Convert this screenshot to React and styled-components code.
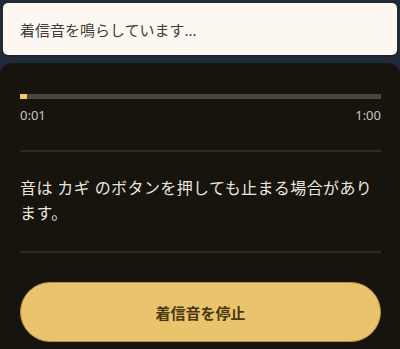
import React from "react";
import styled, { createGlobalStyle } from "styled-components";

const GlobalStyle = createGlobalStyle`
  html, body {
    margin: 0;
    padding: 0;
    background: #1f2a3b;
  }
  body {
    font-family: "Noto Sans", "Noto Sans CJK JP", sans-serif;
  }
`;

const Page = styled.div`
  width: 400px;
  height: 349px;
  display: flex;
  flex-direction: column;
  background: #1f2a3b;
  overflow: hidden;
`;

const Toast = styled.div`
  box-sizing: border-box;
  margin: 3px 3px 0;
  height: 52px;
  display: flex;
  align-items: center;
  padding: 0 17px;
  background: #fdf7f2;
  border-radius: 5px;
  color: #3f3c3b;
  font-size: 15px;
  box-shadow: 0 1px 2px rgba(0, 0, 0, 0.3);
`;

const Sheet = styled.div`
  box-sizing: border-box;
  margin-top: 8px;
  flex: 1;
  display: flex;
  flex-direction: column;
  padding: 31px 19px 0 20px;
  background: #17130d;
  border-radius: 12px 12px 0 0;
`;

const Track = styled.div`
  height: 5px;
  background: #4a463b;
`;

const Fill = styled.div`
  height: 100%;
  background: #f2c863;
`;

const Times = styled.div`
  display: flex;
  justify-content: space-between;
  margin-top: 7px;
  color: #cbc6bb;
  font-size: 13px;
  line-height: 18px;
`;

const Divider = styled.div`
  height: 2px;
  background: #2e2a20;
  margin-top: ${(p) => p.$top}px;
`;

const Note = styled.p`
  margin: 24px 0 0;
  color: #ebe6dc;
  font-size: 16px;
  line-height: 25px;
  letter-spacing: 0.4px;
`;

const StopButton = styled.button`
  margin-top: 29px;
  height: 60px;
  border: 1px solid #b38f3c;
  border-radius: 30px;
  background: #eac46d;
  color: #4a3710;
  font-family: "Noto Sans CJK JP", sans-serif;
  font-size: 15px;
  font-weight: 700;
  cursor: pointer;
`;

export default function App() {
  const elapsed = 1;
  const total = 60;
  return (
    <>
      <GlobalStyle />
      <Page>
        <Toast>着信音を鳴らしています...</Toast>
        <Sheet>
          <Track>
            <Fill style={{ width: `${(elapsed / total) * 100 * 1.2}%` }} />
          </Track>
          <Times>
            <span>0:01</span>
            <span>1:00</span>
          </Times>
          <Divider $top={26} />
          <Note>音は カギ のボタンを押しても止まる場合があります。</Note>
          <Divider $top={25} />
          <StopButton>着信音を停止</StopButton>
        </Sheet>
      </Page>
    </>
  );
}
